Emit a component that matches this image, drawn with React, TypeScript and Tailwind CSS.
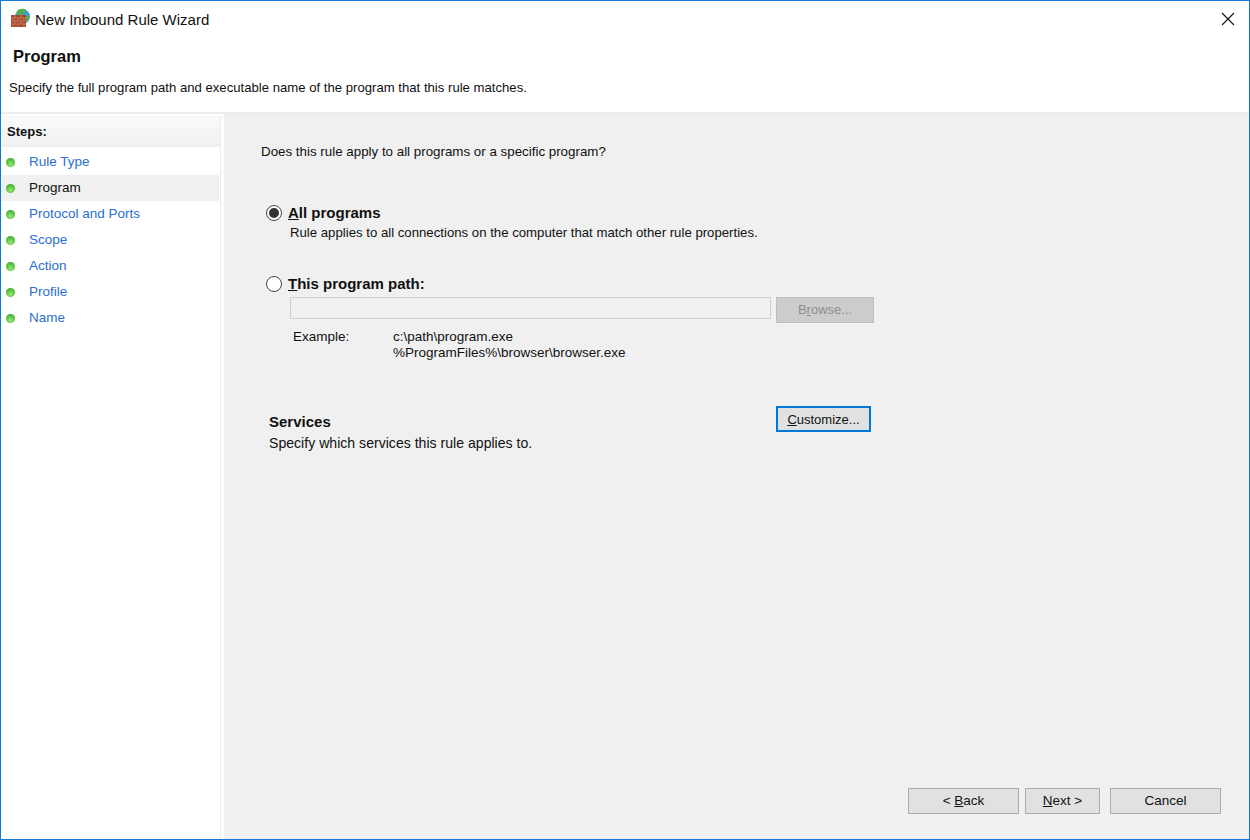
import React from "react";

const font = "font-['Liberation_Sans',Arial,sans-serif]";

function Dot() {
  return (
    <span className="w-[9px] h-[9px] rounded-full bg-[radial-gradient(circle_at_50%_70%,#9be67a_0%,#55c23c_55%,#3f9a33_100%)] shrink-0" />
  );
}

function Step({ label, active }: { label: string; active?: boolean }) {
  return (
    <div className={`h-[26px] flex items-center pl-[5px] mr-[1px] ${active ? "bg-[#f0f0f0]" : ""}`}>
      <Dot />
      <span className={`ml-[14px] pt-[1px] text-[13.5px] ${active ? "text-[#111]" : "text-[#2a6fd0]"}`}>{label}</span>
    </div>
  );
}

function Radio({ checked }: { checked?: boolean }) {
  return (
    <span className="w-[16px] h-[16px] rounded-full border border-[#444] bg-white flex items-center justify-center shrink-0">
      {checked && <span className="w-[10px] h-[10px] rounded-full bg-[#333]" />}
    </span>
  );
}

function Btn({ children, w }: { children: React.ReactNode; w: string }) {
  return (
    <button className={`${w} h-[26px] bg-[#e1e1e1] border border-[#adadad] text-[13.5px] text-[#111] flex items-center justify-center`}>
      {children}
    </button>
  );
}

export default function App() {
  return (
    <div className={`w-[1250px] h-[840px] border border-[#0f7bd6] bg-white flex flex-col overflow-hidden text-[#111] ${font}`}>
      <div className="h-[111px] shrink-0 flex flex-col">
        <div className="h-[36px] flex items-center shrink-0">
          <svg width="24" height="24" viewBox="0 0 24 24" className="ml-[9px] shrink-0">
            <circle cx="12.5" cy="9.5" r="7.5" fill="#3f9be0" />
            <path d="M7 4c2-2.5 7-3 9-1l-1 3-4 2-1 3-3-1z" fill="#56b04a" />
            <path d="M15 9l4.5-1c.3 2.5-.5 5-2 6.5l-2.500-2.500z" fill="#56b04a" />
            <rect x="1" y="8" width="15" height="12" fill="#a5482f" />
            <path d="M1 11h15M1 14h15M1 17h15M5 8v3M11 8v3M3 11v3M8 11v3M14 11v3M5 14v3M11 14v3M3 17v3M8 17v3M14 17v3" stroke="#c9765c" strokeWidth="1" fill="none" />
          </svg>
          <span className="ml-[1px] pt-[3px] text-[15px]">New Inbound Rule Wizard</span>
          <svg width="14" height="14" viewBox="0 0 14 14" className="ml-auto mr-[14px]">
            <path d="M1 1l12 12M13 1L1 13" stroke="#111" strokeWidth="1.1" />
          </svg>
        </div>
        <div className="ml-[12px] mt-[1px] text-[16.5px] font-bold leading-[36px] h-[36px]">Program</div>
        <div className="ml-[8px] mt-[6px] text-[13.15px] leading-[16px] whitespace-nowrap">Specify the full program path and executable name of the program that this rule matches.</div>
      </div>
      <div className="h-[2px] bg-[#ececec] shrink-0" />
      <div className="flex flex-1 min-h-0 pt-[2px]">
        <div className="w-[220px] shrink-0 border-r border-[#ececec]">
          <div className="h-[31px] flex items-center pl-[6px] pt-[1px] text-[13px] font-bold bg-gradient-to-b from-[#fbfbfb] to-[#f0f0f0] mb-[2px]">Steps:</div>
          <Step label="Rule Type" />
          <Step label="Program" active />
          <Step label="Protocol and Ports" />
          <Step label="Scope" />
          <Step label="Action" />
          <Step label="Profile" />
          <Step label="Name" />
        </div>
        <div className="w-[3px] shrink-0" />
        <div className="flex-1 -mt-[2px] bg-[#f0f0f0] flex flex-col text-[13.5px] relative">
          <div className="ml-[37px] mt-[30px] leading-[16px] text-[13.35px]">Does this rule apply to all programs or a specific program?</div>
          <div className="ml-[42px] mt-[45px] flex items-center gap-[6px] h-[16px]">
            <Radio checked />
            <span className="font-bold text-[15px]"><u>A</u>ll programs</span>
          </div>
          <div className="ml-[66px] mt-[4px] leading-[16px] text-[13.2px]">Rule applies to all connections on the computer that match other rule properties.</div>
          <div className="ml-[42px] mt-[35px] flex items-center gap-[6px] h-[16px]">
            <Radio />
            <span className="font-bold text-[15px]"><u>T</u>his program path:</span>
          </div>
          <div className="ml-[66px] mt-[5px] flex gap-[5px]">
            <div className="w-[481px] h-[22px] border border-[#cfcfcf] bg-[#f0f0f0]" />
            <div className="w-[98px] h-[26px] bg-[#cccccc] border border-[#bfbfbf] text-[#8f8f8f] text-[13px] flex items-center justify-center">
              <span>B<u>r</u>owse...</span>
            </div>
          </div>
          <div className="ml-[69px] mt-[6px] flex leading-[16px]">
            <span className="w-[100px]">Example:</span>
            <span>c:\path\program.exe<br />%ProgramFiles%\browser\browser.exe</span>
          </div>
          <div className="mt-[45px] ml-[45px] w-[602px] flex justify-between">
            <div className="mt-[8px]">
              <div className="font-bold leading-[16px] text-[15px]">Services</div>
              <div className="mt-[5px] leading-[16px] text-[14.1px]">Specify which services this rule applies to.</div>
            </div>
            <button className="w-[95px] h-[26px] bg-[#e1e1e1] border-2 border-[#0078d7] flex items-center justify-center text-[13px]">
              <span className="pt-[1px]"><u>C</u>ustomize...</span>
            </button>
          </div>
          <div className="mt-auto mb-[25px] flex ml-[684px]">
            <Btn w="w-[111px]"><span>&lt; <u>B</u>ack</span></Btn>
            <div className="w-[6px]" />
            <Btn w="w-[75px]"><span><u>N</u>ext &gt;</span></Btn>
            <div className="w-[10px]" />
            <Btn w="w-[111px]">Cancel</Btn>
          </div>
        </div>
      </div>
    </div>
  );
}
